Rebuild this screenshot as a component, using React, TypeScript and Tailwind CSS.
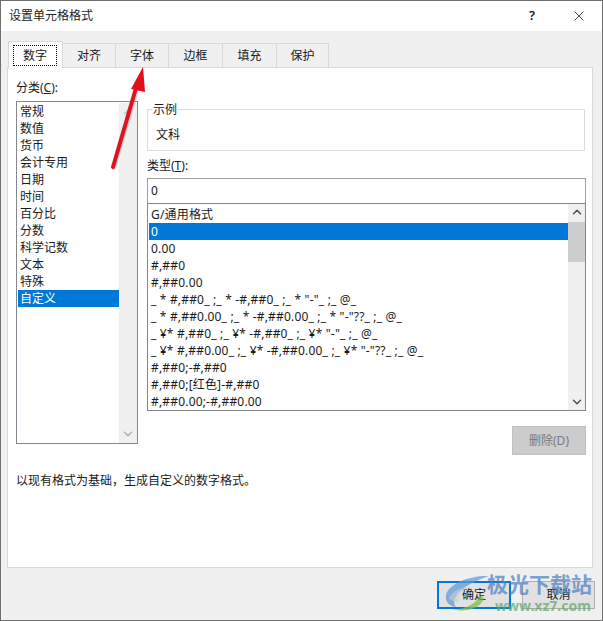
import { ChevronDown, ChevronUp, X } from "lucide-react"

const tabs = ["数字", "对齐", "字体", "边框", "填充", "保护"]
const tabWidths = ["w-[55px]", "w-[54px]", "w-[54px]", "w-[55px]", "w-[55px]", "w-[53px]"]

const categories = ["常规", "数值", "货币", "会计专用", "日期", "时间", "百分比", "分数", "科学记数", "文本", "特殊", "自定义"]

const formats = [
  "G/通用格式",
  "0",
  "0.00",
  "#,##0",
  "#,##0.00",
  '_ * #,##0_ ;_ * -#,##0_ ;_ * "-"_ ;_ @_',
  '_ * #,##0.00_ ;_ * -#,##0.00_ ;_ * "-"??_ ;_ @_',
  '_ ¥* #,##0_ ;_ ¥* -#,##0_ ;_ ¥* "-"_ ;_ @_',
  '_ ¥* #,##0.00_ ;_ ¥* -#,##0.00_ ;_ ¥* "-"??_ ;_ @_',
  "#,##0;-#,##0",
  "#,##0;[红色]-#,##0",
  "#,##0.00;-#,##0.00",
]

function Row({ text, selected }: { text: string; selected: boolean }) {
  return (
    <div className={`h-[17px] leading-[17px] pl-[2px] whitespace-nowrap ${selected ? "bg-[#0078d7] text-white" : ""}`}>
      {text}
    </div>
  )
}

export default function App() {
  return (
    <div
      className="relative w-[603px] h-[621px] overflow-hidden bg-[#f0f0f0] border border-[#707070] text-[12px] text-[#1a1a1a] flex flex-col"
      style={{ fontFamily: '"Noto Sans", "Noto Sans CJK SC", sans-serif' }}
    >
      <div className="h-[30px] bg-white flex items-center pl-[8px] shrink-0">
        <span className="text-[#222]">设置单元格格式</span>
        <span className="ml-auto mr-[36px] text-[13px] font-semibold">?</span>
        <X className="mr-[15px] w-[16px] h-[16px]" strokeWidth={1.2} />
      </div>

      <div className="flex pl-[7px] pt-[10px] h-[36px] shrink-0 items-end">
        {tabs.map((t, i) => (
          <div
            key={t}
            className={`${tabWidths[i]} flex items-center justify-center border border-[#d9d9d9] -ml-px first:ml-0 ${
              i === 0 ? "h-[27px] bg-white border-b-0 relative z-10 -mb-px" : "h-[24px] bg-[#f0f0f0] border-b-0"
            }`}
          >
            {i === 0 ? <span className="border border-dotted border-black px-[9px] py-[2px] leading-[15px] -ml-[1px]">{t}</span> : t}
          </div>
        ))}
      </div>

      <div className="ml-[6px] w-[586px] h-[501px] bg-white border border-[#d9d9d9] shrink-0 pl-[8px] flex flex-col">
        <div className="flex gap-[9px]">
          <div className="w-[122px] pt-[11px]">
            <div className="h-[17px] leading-[17px] mb-[5px]">
              分类(<span className="underline">C</span>):
            </div>
            <div className="h-[343px] border border-[#828790] pl-px pt-px flex">
              <div className="flex-1">
                {categories.map((c) => (
                  <Row key={c} text={c} selected={c === "自定义"} />
                ))}
              </div>
              <div className="w-[18px] bg-[#f0f0f0] flex flex-col justify-between items-center py-[2px] shrink-0">
                <ChevronUp className="w-[14px] h-[14px] text-[#c0c0c0]" strokeWidth={2.5} />
                <ChevronDown className="w-[14px] h-[14px] text-[#b0b0b0]" strokeWidth={2.5} />
              </div>
            </div>
          </div>

          <div className="w-[439px] pt-[41px]">
            <div className="relative h-[42px] w-[438px] border border-[#dcdcdc] pl-[8px] pt-[16px] leading-[17px]">
              <span className="absolute left-[4px] -top-[9px] bg-white px-px leading-[17px]">示例</span>
              文科
            </div>
            <div className="h-[17px] leading-[17px] mt-[6px] mb-[4px]">
              类型(<span className="underline">T</span>):
            </div>
            <div className="h-[26px] border border-[#a0a0a0] border-b-[#828790] pl-[3px] leading-[24px]">0</div>
            <div className="h-[208px] -mt-px border border-[#828790] pl-px pt-[2px] flex">
              <div className="flex-1 min-w-0 overflow-hidden tracking-[0.18px]">
                {formats.map((f, i) => (
                  <Row key={f} text={f} selected={i === 1} />
                ))}
              </div>
              <div className="w-[17px] -mt-[2px] bg-[#f0f0f0] flex flex-col items-center shrink-0">
                <ChevronUp className="w-[14px] h-[14px] mt-[1px] text-[#505050]" strokeWidth={2.5} />
                <div className="w-full h-[40px] mt-[3px] bg-[#cdcdcd]" />
                <ChevronDown className="w-[14px] h-[14px] mt-auto mb-[1px] text-[#505050]" strokeWidth={2.5} />
              </div>
            </div>
            <div className="flex justify-end mt-[15px]">
              <div className="w-[74px] h-[29px] bg-[#cccccc] border border-[#bfbfbf] text-[#7a7a7a] flex items-center justify-center">
                删除(D)
              </div>
            </div>
          </div>
        </div>
        <div className="mt-[17px] leading-[17px]">以现有格式为基础，生成自定义的数字格式。</div>
      </div>

      <div className="flex justify-end gap-[11px] pr-[7px] pt-[13px]">
        <div className="w-[74px] h-[28px] bg-[#e1e1e1] border-2 border-[#0078d7] flex items-center justify-center">确定</div>
        <div className="w-[73px] h-[28px] bg-[#e1e1e1] border border-[#adadad] flex items-center justify-center">取消</div>
      </div>

      {/* annotation arrow */}
      <svg className="absolute -left-px -top-px pointer-events-none" width="603" height="621" viewBox="0 0 603 621">
        <path d="M114 168 L137 90" stroke="#9a9a9a" strokeOpacity="0.45" strokeWidth="4" strokeLinecap="round" fill="none" />
        <path d="M113 167 L136 88" stroke="#dd1420" strokeWidth="4" strokeLinecap="round" fill="none" />
        <path d="M143 67 L145 92 L131 89 Z" fill="#e30e1c" />
      </svg>

      {/* watermark */}
      <div className="absolute left-[442px] top-[570px] w-[158px] h-[46px] pointer-events-none">
        <svg className="absolute left-0 top-[2px]" width="56" height="40" viewBox="0 0 56 40">
          <path d="M46 3 C28 2 6 10 3 22 C2 29 6 33 13 34 C7 26 16 13 46 3 Z" fill="#5b97d5" opacity="0.7" />
          <path d="M6 26 C8 18 18 14 28 14 C18 18 14 24 16 30 Z" fill="#c8cdd3" opacity="0.6" />
          <path d="M38 22 C32 32 20 37 10 36 C22 40 36 36 41 26 Z" fill="#7cbf45" opacity="0.75" />
        </svg>
        <div className="absolute left-[44px] top-0 text-[21px] leading-[26px] font-bold text-[#4a7fc0] opacity-70 whitespace-nowrap">
          极光下载站
        </div>
        <div className="absolute left-[52px] top-[26px] text-[14px] leading-[18px] font-bold text-[#5aa86a] opacity-70 whitespace-nowrap">
          www.xz7.com
        </div>
      </div>
    </div>
  )
}
